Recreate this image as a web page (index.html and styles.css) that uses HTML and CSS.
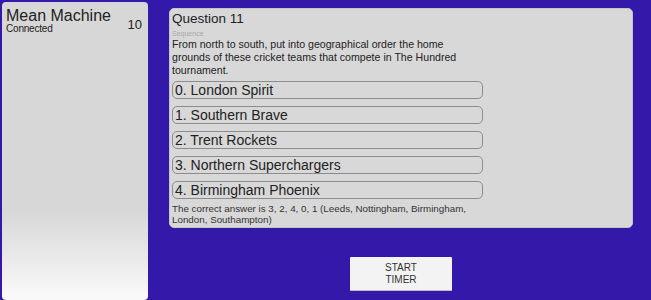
FILE: index.html
```html
<!DOCTYPE html>
<html lang="en">
<head>
    <meta charset="UTF-8">
    <title>Quiz - Question 11</title>
    <link rel="stylesheet" href="styles.css">
</head>
<body>

<div class="screen">
    <div class="team-panel">
        <div class="team-row">
            <div>
                <div class="team-name">Mean Machine</div>
                <div class="team-status">Connected</div>
            </div>
            <div class="team-score">10</div>
        </div>
    </div>

    <div class="main">
        <div class="question">
            <div class="q-title">Question 11</div>
            <div class="q-type">Sequence</div>
            <p class="q-text">From north to south, put into geographical order the home grounds of these cricket teams that compete in The Hundred tournament.</p>
            <div class="options">
                <div class="option">0. London Spirit</div>
                <div class="option">1. Southern Brave</div>
                <div class="option">2. Trent Rockets</div>
                <div class="option">3. Northern Superchargers</div>
                <div class="option">4. Birmingham Phoenix</div>
            </div>
            <p class="answer">The correct answer is 3, 2, 4, 0, 1 (Leeds, Nottingham, Birmingham, London, Southampton)</p>
        </div>
        <button class="timer-btn">START<br>TIMER</button>
    </div>
</div>

</body>
</html>
```

FILE: styles.css
```css
html, body { margin: 0; padding: 0; }
body { background-color: #3418a9; font-family: "Liberation Sans", Arial, sans-serif; color: #222; width: 651px; height: 300px; overflow: hidden; }
.screen { display: flex; padding: 2px 0 0 2px; }
.team-panel { width: 146px; height: 298px; box-sizing: border-box; background: linear-gradient(to bottom, #d7d7d7 0%, #d7d7d7 70%, #fafafa 100%); border-radius: 4px; padding: 6px 6px 0 4px; }
.team-row { display: flex; justify-content: space-between; align-items: flex-start; }
.team-name { font-size: 16px; line-height: 16px; }
.team-status { font-size: 10px; line-height: 9px; letter-spacing: -0.2px; }
.team-score { font-size: 13px; line-height: 13px; margin-top: 10px; }
.main { margin-left: 21px; margin-top: 6px; width: 464px; display: flex; flex-direction: column; align-items: center; }
.question { width: 100%; height: 220px; box-sizing: border-box; background-color: #d8d8d8; border-radius: 5px; border: 1px solid #c4c4c4; padding: 2px 3px 0 2px; }
.q-title { font-size: 13.5px; line-height: 16px; }
.q-type { font-size: 7px; line-height: 9px; margin-top: 2px; color: #a8a8a8; }
.q-text { font-size: 10.6px; line-height: 13px; margin: 0; width: 310px; }
.options { display: flex; flex-direction: column; gap: 7px; margin-top: 4px; }
.option { width: 311px; height: 18px; box-sizing: border-box; border: 1px solid #8c8c8c; border-radius: 5px; font-size: 14px; line-height: 16px; padding-left: 2px; }
.answer { font-size: 9.8px; line-height: 11px; margin: 4px 0 0 0; width: 320px; color: #333; }
.timer-btn { margin-top: 29px; width: 102px; height: 34px; background-color: #f3f3f3; border: none; border-bottom: 1px solid #bbb; border-radius: 1px; font-family: "Liberation Sans", Arial, sans-serif; font-size: 10px; line-height: 12px; color: #333; padding: 0; }
```
